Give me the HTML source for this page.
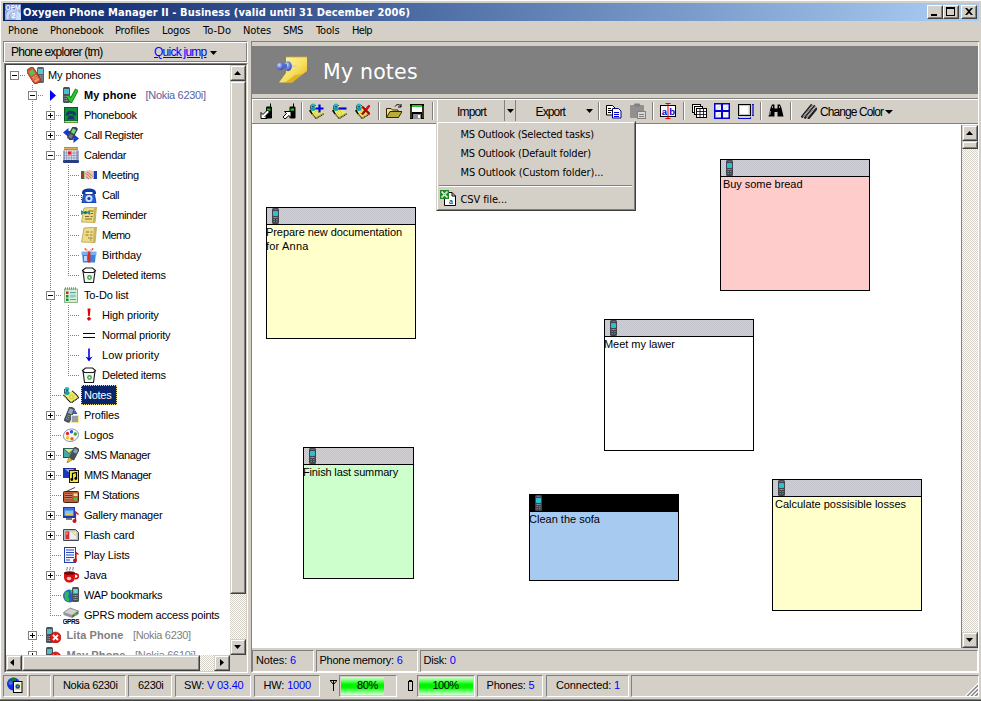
<!DOCTYPE html>
<html><head><meta charset="utf-8"><title>Oxygen Phone Manager II</title>
<style>
html,body{margin:0;padding:0;}
body{width:981px;height:701px;overflow:hidden;background:#D4D0C8;position:relative;font-family:"Liberation Sans",sans-serif;font-size:11px;color:#000;}
div,span,svg{position:absolute;box-sizing:border-box;}
i,b{font-style:normal;font-weight:normal}
.t{white-space:nowrap;line-height:14px;height:14px;}
.tah{font-family:"DejaVu Sans Condensed","DejaVu Sans",sans-serif;font-size:11px;}
.ver{font-family:"DejaVu Sans",sans-serif;}
.blue{color:#0000FF;position:static}
.raised{border:1px solid;border-color:#fff #404040 #404040 #fff;background:#D4D0C8;}
.raised:after{content:"";position:absolute;left:0;top:0;right:0;bottom:0;border:1px solid;border-color:#D4D0C8 #808080 #808080 #D4D0C8;}
.sbtn{border:1px solid;border-color:#D4D0C8 #404040 #404040 #D4D0C8;background:#D4D0C8;}
.sbtn:after{content:"";position:absolute;left:0;top:0;right:0;bottom:0;border:1px solid;border-color:#fff #808080 #808080 #fff;}
.sunk1{border:1px solid;border-color:#808080 #fff #fff #808080;}
.track{background-color:#fff;background-image:conic-gradient(#D4D0C8 25%,#fff 0 50%,#D4D0C8 0 75%,#fff 0);background-size:2px 2px;}
.hatch{background-color:#CBCBCF;background-image:conic-gradient(#C2C2CA 25%,#D3D1D3 0 50%,#C2C2CA 0 75%,#D3D1D3 0);background-size:2px 2px;}
.note{border:1px solid #000;}
.nh{left:0;top:0;right:0;height:17px;border-bottom:1px solid #000;}
.nt{font-size:11px;line-height:14px;white-space:nowrap;}
.vd{width:1px;background-image:linear-gradient(#808080 50%,transparent 50%);background-size:1px 2px;}
.hd{height:1px;background-image:linear-gradient(90deg,#808080 50%,transparent 50%);background-size:2px 1px;}
.pm{width:9px;height:9px;border:1px solid #808080;background:#fff;}
.pm i{position:absolute;left:1px;top:3px;width:5px;height:1px;background:#000;}
.pm b{position:absolute;left:3px;top:1px;width:1px;height:5px;background:#000;}
.sep{width:2px;border-left:1px solid #808080;border-right:1px solid #fff;}
.gauge{background:linear-gradient(#D0FFD0 0%,#A0FFA0 12%,#50FF50 26%,#00F800 40%,#00F000 50%,#00F800 60%,#50FF50 74%,#A0FFA0 88%,#D0FFD0 100%);}
</style></head>
<body>
<div style="left:0;top:0;width:981px;height:1px;background:#fff"></div>
<div style="left:0;top:0;width:1px;height:699px;background:#fff"></div>
<div style="left:0;top:699px;width:981px;height:1px;background:#808080"></div>
<div style="left:0;top:700px;width:981px;height:1px;background:#404040"></div>
<div style="left:3px;top:3px;width:976px;height:18px;background:linear-gradient(90deg,#0A246A 0%,#0A246A 1%,#A6CAF0 97%,#A6CAF0 100%);"></div>
<svg style="left:5px;top:4px" width="16" height="16" viewBox="0 0 16 16"><rect width="16" height="16" fill="#90ACE0"/><rect width="16" height="6" fill="#6888C8"/><path d="M3 15C1 9 6 5 11 7" stroke="#C8D8F8" stroke-width="2.500" fill="none"/><circle cx="9.500" cy="11" r="4.500" fill="#B0C4F0"/><path d="M12 6l4 4v6h-5z" fill="#C8DCFC"/><text x="0.500" y="5.800" font-size="6.500" font-weight="bold" fill="#fff" font-family="Liberation Sans,sans-serif" textLength="15">OPM</text><text x="6.500" y="13.500" font-size="7" font-weight="bold" fill="#fff" font-family="Liberation Sans,sans-serif">2</text></svg>
<span class="t" style="left:23px;top:6px;letter-spacing:0.098px;color:#fff;font-weight:bold;font-family:'DejaVu Sans Condensed','DejaVu Sans',sans-serif;">Oxygen Phone Manager II - Business (valid until 31 December 2006)</span>
<div class="raised" style="left:927px;top:5px;width:16px;height:14px;"><div style="left:3px;top:8px;width:6px;height:2px;background:#000"></div></div>
<div class="raised" style="left:943px;top:5px;width:16px;height:14px;"><div style="left:2px;top:1px;width:9px;height:9px;border:1px solid #000;border-top-width:2px"></div></div>
<div class="raised" style="left:961px;top:5px;width:16px;height:14px;"><svg style="left:3px;top:2px" width="8" height="7" viewBox="0 0 8 7"><path d="M0 0h2l2 2 2-2h2L5 3.500 8 7H6L4 5 2 7H0l3-3.500z" fill="#000"/></svg></div>
<span class="t tah" style="left:8px;top:24px;letter-spacing:-0.132px;">Phone</span>
<span class="t tah" style="left:50px;top:24px;letter-spacing:-0.142px;">Phonebook</span>
<span class="t tah" style="left:115px;top:24px;letter-spacing:-0.173px;">Profiles</span>
<span class="t tah" style="left:162px;top:24px;letter-spacing:-0.173px;">Logos</span>
<span class="t tah" style="left:203px;top:24px;letter-spacing:0.064px;">To-Do</span>
<span class="t tah" style="left:243px;top:24px;letter-spacing:-0.116px;">Notes</span>
<span class="t tah" style="left:283px;top:24px;letter-spacing:-0.369px;">SMS</span>
<span class="t tah" style="left:316px;top:24px;letter-spacing:-0.138px;">Tools</span>
<span class="t tah" style="left:352px;top:24px;letter-spacing:-0.642px;">Help</span>
<div style="left:3px;top:41px;width:244px;height:21px;border:1px solid #808080;"></div>
<div style="left:4px;top:42px;width:244px;height:21px;border:1px solid #fff;"></div>
<div style="left:5px;top:43px;width:241px;height:18px;background:#D4D0C8"></div>
<span class="t" style="left:11px;top:45px;letter-spacing:-0.765px;font-size:12px;">Phone explorer (tm)</span>
<span class="t" style="left:154px;top:45px;letter-spacing:-0.752px;font-size:12px;color:#0000FF;text-decoration:underline;">Quick jump</span>
<svg style="left:210px;top:51px" width="7" height="4"><path d="M0 0h7L3.500 4z" fill="#000"/></svg>
<div style="left:4px;top:63px;width:244px;height:610px;border:1px solid;border-color:#808080 #fff #fff #808080;background:#fff"></div>
<div style="left:5px;top:64px;width:242px;height:608px;border:1px solid;border-color:#404040 #D4D0C8 #D4D0C8 #404040;background:#fff;overflow:hidden">
<div class="vd" style="left:26px;top:20px;height:587px"></div>
<div class="vd" style="left:44px;top:40px;height:511px"></div>
<div class="vd" style="left:62px;top:100px;height:111px"></div>
<div class="vd" style="left:62px;top:240px;height:71px"></div>
<div class="hd" style="left:14px;top:10px;width:6px"></div>
<div class="pm" style="left:4px;top:6px"><i></i></div>
<svg style="left:21px;top:2px" width="18" height="17" viewBox="0 0 18 17"><rect x="10" y="0" width="7" height="16" rx="1.500" fill="#5C646C"/><rect x="11" y="2" width="5" height="5" fill="#58C8D0"/><path d="M11.500 9h4M11.500 11h4M11.500 13h4" stroke="#A8B0B8" stroke-dasharray="1 .5"/><g transform="rotate(-32 7 9)"><rect x="3" y="0" width="8" height="17" rx="2.500" fill="#D8502C"/><rect x="3" y="0" width="8" height="17" rx="2.500" fill="none" stroke="#8C2810" stroke-width=".7"/><rect x="4.500" y="2.500" width="5" height="5" fill="#58C060"/><rect x="4.500" y="9" width="5" height="6" rx="1" fill="#F0A080"/><path d="M5 10.500h4M5 12.500h4" stroke="#B03818" stroke-dasharray="1 .5"/></g></svg>
<span class="t" style="left:42px;top:3px;letter-spacing:-0.112px;">My phones</span>
<div class="hd" style="left:32px;top:30px;width:6px"></div>
<div class="pm" style="left:22px;top:26px"><i></i></div>
<svg style="left:56px;top:22px" width="16" height="16" viewBox="0 0 16 16"><rect x="1" y="0" width="7" height="16" rx="1.500" fill="#485058"/><rect x="2" y="2" width="5" height="5" fill="#48C0C8"/><path d="M2.500 9.500h4M2.500 11.500h4M2.500 13.500h4" stroke="#98A0A8" stroke-dasharray="1 .5"/><path d="M5.500 9l3.500 4.500L15 2.500" stroke="#0C780C" stroke-width="4" fill="none"/><path d="M5.500 9l3.500 4.500L15 2.500" stroke="#28C828" stroke-width="2.400" fill="none"/></svg>
<svg style="left:44px;top:25px" width="6" height="11"><path d="M0 0L6 5.500 0 11z" fill="#0000FF"/></svg>
<span class="t" style="left:78px;top:23px;letter-spacing:0.146px;color:#000;font-weight:bold;">My phone</span>
<span class="t" style="left:139.5px;top:23px;letter-spacing:-0.309px;color:#5A629C;">[Nokia 6230i]</span>
<div class="hd" style="left:50px;top:50px;width:6px"></div>
<div class="pm" style="left:40px;top:46px"><i></i><b></b></div>
<svg style="left:57px;top:42px" width="16" height="16" viewBox="0 0 16 16"><rect x="1" y="0" width="14" height="16" fill="#085828"/><rect x="2" y="1" width="12" height="12.500" fill="#10903C"/><rect x="1.500" y="14" width="13" height="1.500" fill="#D8D060"/><path d="M3 7.500c0-5 10-5 10 0v1h-3V7H6v1.500H3z" fill="#183868"/><path d="M4 12.500l2-4h4l2 4z" fill="#183868"/></svg>
<span class="t" style="left:78px;top:43px;letter-spacing:-0.329px;">Phonebook</span>
<div class="hd" style="left:50px;top:70px;width:6px"></div>
<div class="pm" style="left:40px;top:66px"><i></i><b></b></div>
<svg style="left:57px;top:62px" width="16" height="16" viewBox="0 0 16 16"><path d="M0 5.500L5.500 1v3H10v3H5.500v3z" fill="#1838D0"/><path d="M16 11.500L10.500 7v3H6v3h4.500v3z" fill="#1838D0"/><path d="M6 11.500l5 .5" stroke="#30C0D8" stroke-width="1.200"/><g transform="rotate(28 9 7)"><rect x="6" y="-1" width="6" height="14" rx="2" fill="#384048"/><rect x="7.300" y="1.500" width="3.400" height="4.500" fill="#68E078"/><rect x="7.300" y="7.500" width="3.400" height="4" fill="#707880"/></g></svg>
<span class="t" style="left:78px;top:63px;letter-spacing:-0.29px;">Call Register</span>
<div class="hd" style="left:50px;top:90px;width:6px"></div>
<div class="pm" style="left:40px;top:86px"><i></i></div>
<svg style="left:57px;top:82px" width="16" height="16" viewBox="0 0 16 16"><rect x="1" y="0" width="14" height="3.500" fill="#C88C30"/><path d="M1.500 1.500h13" stroke="#F0D080" stroke-dasharray="1 1"/><rect x="1" y="3.500" width="14" height="9.500" fill="#DCE0EC"/><path d="M1 6h14M1 8.500h14M1 11h14M3.500 3.500v9.500M6 3.500v9.500M8.500 3.500v9.500M11 3.500v9.500M13.500 3.500v9.500" stroke="#8890B0" stroke-width=".7"/><rect x="5" y="4.500" width="3" height="3" fill="#E81828"/><rect x="0" y="13" width="16" height="3" rx="1" fill="#283C80"/><rect x="0.500" y="3.500" width="1" height="10" fill="#506098"/><rect x="14.500" y="3.500" width="1" height="10" fill="#506098"/></svg>
<span class="t" style="left:78px;top:83px;letter-spacing:-0.318px;">Calendar</span>
<div class="hd" style="left:64px;top:110px;width:10px"></div>
<svg style="left:75px;top:102px" width="16" height="16" viewBox="0 0 16 16"><rect x="0" y="4" width="3.500" height="8" fill="#188038"/><rect x="1" y="6" width="1.500" height="4" fill="#D02020"/><rect x="12.500" y="4" width="3.500" height="8" fill="#1840B8"/><path d="M3.500 4.500c3-2 6-2 9 0v6.500c-3 2-6 2-9 0z" fill="#F0C4B0"/><path d="M4.500 6.500c2 1 4 3 6 5M6 5c2 1 4 3 5.500 4.500M5 9.500l3 2.500" stroke="#A87058" stroke-width=".9" fill="none"/></svg>
<span class="t" style="left:96px;top:103px;letter-spacing:-0.32px;">Meeting</span>
<div class="hd" style="left:64px;top:130px;width:10px"></div>
<svg style="left:75px;top:122px" width="16" height="16" viewBox="0 0 16 16"><path d="M1 5.500C1 0 15 0 15 5.500V7h-3.500V5h-7v2H1z" fill="#1038A8"/><path d="M2.500 7.500h11L15 16H1z" fill="#2060D8"/><path d="M2.500 7.500h11L15 16H1z" fill="none" stroke="#0C2880" stroke-width=".8"/><circle cx="8" cy="11.500" r="3.500" fill="#D0E0FF"/><circle cx="8" cy="11.500" r="1.600" fill="#1038A8"/><path d="M0.500 8v6" stroke="#404040" stroke-dasharray="1 1"/></svg>
<span class="t" style="left:96px;top:123px;letter-spacing:-0.488px;">Call</span>
<div class="hd" style="left:64px;top:150px;width:10px"></div>
<svg style="left:75px;top:142px" width="16" height="16" viewBox="0 0 16 16"><path d="M3 1L15.500 0 14 15.500 0.500 15z" fill="#ECDC88"/><path d="M3 1L15.500 0 14 15.500 0.500 15z" fill="none" stroke="#B8A048" stroke-width=".8"/><path d="M13 0.500l2.500-.5-1.500 15.500-2-.2z" fill="#C8B460"/><path d="M9 4h3.500M9.500 6.500h2.500M4 9.500h4M9.500 9.500h2M4 12h7" stroke="#806828"/><path d="M0 3l4 2.500L0 8zM9 3L5 5.500 9 8z" fill="#209890"/><circle cx="4.500" cy="5.500" r="1.500" fill="#106860"/></svg>
<span class="t" style="left:96px;top:143px;letter-spacing:-0.398px;">Reminder</span>
<div class="hd" style="left:64px;top:170px;width:10px"></div>
<svg style="left:75px;top:162px" width="16" height="16" viewBox="0 0 16 16"><path d="M3 1L15.500 0 14 15.500 0.500 15z" fill="#ECDC88"/><path d="M3 1L15.500 0 14 15.500 0.500 15z" fill="none" stroke="#B8A048" stroke-width=".8"/><path d="M13 0.500l2.500-.5-1.500 15.500-2-.2z" fill="#C8B460"/><path d="M5 5h3M9.500 5h2M4.500 8h3M9 8h2.500M7 11h4.500M9 13h1.500" stroke="#907830"/></svg>
<span class="t" style="left:96px;top:163px;letter-spacing:-0.641px;">Memo</span>
<div class="hd" style="left:64px;top:190px;width:10px"></div>
<svg style="left:75px;top:182px" width="16" height="16" viewBox="0 0 16 16"><path d="M1 6h14l-1 9.500H2z" fill="#3C84D8"/><path d="M0.500 4.500h15V8h-15z" fill="#78B0F0"/><path d="M3 9h3v5H3z" fill="#B8D8FF"/><rect x="6.800" y="4.500" width="2.600" height="11" fill="#E02828"/><path d="M8 4.500C4 -2 0 3 8 4.500C16 3 12 -2 8 4.500" fill="#E83030"/><path d="M8 4.500C5 0.500 3 3 8 4.500C13 3 11 0.500 8 4.500" fill="#fff"/></svg>
<span class="t" style="left:96px;top:183px;letter-spacing:-0.107px;">Birthday</span>
<div class="hd" style="left:64px;top:210px;width:10px"></div>
<svg style="left:75px;top:202px" width="16" height="16" viewBox="0 0 16 16"><path d="M2 4l1.500 11.500h9L14 4z" fill="#F4F4F4" stroke="#181818" stroke-width="1.100"/><path d="M1.500 3.500L4.500 1h7l3 2.500-2 2h-9z" fill="#fff" stroke="#181818" stroke-width="1.100"/><circle cx="8.500" cy="10.500" r="2.400" fill="#38A838"/><circle cx="8.500" cy="10.500" r="1" fill="#fff"/></svg>
<span class="t" style="left:96px;top:203px;letter-spacing:-0.274px;">Deleted items</span>
<div class="hd" style="left:50px;top:230px;width:6px"></div>
<div class="pm" style="left:40px;top:226px"><i></i></div>
<svg style="left:57px;top:222px" width="16" height="16" viewBox="0 0 16 16"><rect x="1.500" y="2" width="13" height="13.500" fill="#D4F0D0" stroke="#78A078" stroke-width=".8"/><path d="M2 1.500h12" stroke="#B88828" stroke-width="2.500" stroke-dasharray="1 1"/><rect x="3" y="4.500" width="2.500" height="2.500" fill="#D82020"/><rect x="3" y="8" width="2.500" height="2.500" fill="#208828"/><rect x="3" y="11.500" width="2.500" height="2.500" fill="#208828"/><path d="M7 5.500h6M7 9h6M7 12.500h6" stroke="#58A8B0" stroke-width="1.200"/><path d="M7 7h5M7 10.700h4" stroke="#A0D0D0" stroke-width=".8"/></svg>
<span class="t" style="left:78px;top:223px;letter-spacing:-0.135px;">To-Do list</span>
<div class="hd" style="left:64px;top:250px;width:10px"></div>
<svg style="left:75px;top:242px" width="16" height="16" viewBox="0 0 16 16"><path d="M6.500 1.500h3L8.800 9H7.200z" fill="#E80000"/><path d="M8 9.500l2.200 2.200L8 14l-2.200-2.300z" fill="#E80000"/></svg>
<span class="t" style="left:96px;top:243px;letter-spacing:-0.153px;">High priority</span>
<div class="hd" style="left:64px;top:270px;width:10px"></div>
<svg style="left:75px;top:262px" width="16" height="16" viewBox="0 0 16 16"><path d="M2 6.500h12M2 10.500h12" stroke="#000" stroke-width="1.100"/></svg>
<span class="t" style="left:96px;top:263px;letter-spacing:-0.214px;">Normal priority</span>
<div class="hd" style="left:64px;top:290px;width:10px"></div>
<svg style="left:75px;top:282px" width="16" height="16" viewBox="0 0 16 16"><path d="M8 1.500v10" stroke="#0000E8" stroke-width="1.600"/><path d="M4.500 9.500L8 14.500l3.500-5-3.500 1.500z" fill="#0000E8"/></svg>
<span class="t" style="left:96px;top:283px;letter-spacing:0.088px;">Low priority</span>
<div class="hd" style="left:64px;top:310px;width:10px"></div>
<svg style="left:75px;top:302px" width="16" height="16" viewBox="0 0 16 16"><path d="M2 4l1.500 11.500h9L14 4z" fill="#F4F4F4" stroke="#181818" stroke-width="1.100"/><path d="M1.500 3.500L4.500 1h7l3 2.500-2 2h-9z" fill="#fff" stroke="#181818" stroke-width="1.100"/><circle cx="8.500" cy="10.500" r="2.400" fill="#38A838"/><circle cx="8.500" cy="10.500" r="1" fill="#fff"/></svg>
<span class="t" style="left:96px;top:303px;letter-spacing:-0.274px;">Deleted items</span>
<div class="hd" style="left:46px;top:330px;width:10px"></div>
<svg style="left:57px;top:322px" width="16" height="16" viewBox="0 0 16 16"><path d="M0.500 8L9 3.500l7 7-8 5.500z" fill="#ECE868"/><path d="M0.500 8L8 16l8-5.500L9 3.500" fill="none" stroke="#000" stroke-width="1.200" stroke-dasharray="1.200 .5"/><circle cx="8.500" cy="10" r="2" fill="none" stroke="#C8C040" stroke-width=".8"/><ellipse cx="4" cy="2" rx="2.300" ry="1.900" fill="#20B8C0"/><rect x="2.800" y="2.800" width="2.400" height="2.500" fill="#0C6068"/><ellipse cx="4" cy="6" rx="2.700" ry="1.900" fill="#189CA8"/><path d="M1.500 2v4.500" stroke="#083038" stroke-width=".8"/></svg>
<div style="left:75px;top:320px;width:36px;height:20px;background:#0A246A;border:1px dotted #E8D880"></div>
<span class="t" style="left:78px;top:323px;letter-spacing:-0.267px;color:#fff;">Notes</span>
<div class="hd" style="left:50px;top:350px;width:6px"></div>
<div class="pm" style="left:40px;top:346px"><i></i><b></b></div>
<svg style="left:57px;top:342px" width="16" height="16" viewBox="0 0 16 16"><g transform="rotate(22 6 8)"><rect x="3" y="-0.500" width="6.500" height="16" rx="2" fill="#485058"/><rect x="4.200" y="1.500" width="4" height="5" fill="#98A8B8"/><path d="M4.500 8.500h3.500M4.500 10.500h3.500M4.500 12.500h3.500" stroke="#A0A8B0" stroke-dasharray="1 .5"/></g><rect x="8" y="8" width="8" height="8" fill="#F4E890"/><path d="M9 10h6M9 12h6M9 14h6" stroke="#3858C8"/><path d="M12 3l2.500 4h-5z" fill="#3858C8"/></svg>
<span class="t" style="left:78px;top:343px;letter-spacing:-0.16px;">Profiles</span>
<div class="hd" style="left:46px;top:370px;width:10px"></div>
<svg style="left:57px;top:362px" width="16" height="16" viewBox="0 0 16 16"><path d="M8.500 2C13 2 16 5 15.500 8.500 15 12 11 14.500 7 14.500 3 14.500 0.500 12 0.500 9 0.500 5 4 2 8.500 2z" fill="#FAF4EC" stroke="#7888B0" stroke-width=".9"/><circle cx="4.500" cy="6.500" r="1.700" fill="#E82828"/><circle cx="8.500" cy="4.800" r="1.700" fill="#2858E0"/><circle cx="12.300" cy="7" r="1.700" fill="#30A830"/><circle cx="4.500" cy="10.800" r="1.700" fill="#E8C818"/><circle cx="9" cy="11.800" r="1.700" fill="#E86818"/></svg>
<span class="t" style="left:78px;top:363px;letter-spacing:-0.055px;">Logos</span>
<div class="hd" style="left:50px;top:390px;width:6px"></div>
<div class="pm" style="left:40px;top:386px"><i></i><b></b></div>
<svg style="left:57px;top:382px" width="16" height="16" viewBox="0 0 16 16"><rect x="0.500" y="1.500" width="11" height="9" fill="#48A8A8" stroke="#185858"/><path d="M0.500 1.500l5.500 5 5.500-5z" fill="#E8E468" stroke="#185858" stroke-width=".8"/><g transform="rotate(28 11 7)"><rect x="8" y="0" width="6" height="13" rx="1.500" fill="#485058"/><rect x="9.200" y="1.800" width="3.600" height="4" fill="#90A0B0"/></g><path d="M4 16l2-6 3 3z" fill="#E8C418"/><path d="M4 16l2-6 3 3z" fill="none" stroke="#806808" stroke-width=".6"/></svg>
<span class="t" style="left:78px;top:383px;letter-spacing:-0.365px;">SMS Manager</span>
<div class="hd" style="left:50px;top:410px;width:6px"></div>
<div class="pm" style="left:40px;top:406px"><i></i><b></b></div>
<svg style="left:57px;top:402px" width="16" height="16" viewBox="0 0 16 16"><rect x="0" y="1" width="13" height="10" fill="#1838C0"/><path d="M0.500 1.500l6 5 6-5z" fill="#88A8F8" stroke="#102080" stroke-width=".8"/><rect x="6.500" y="3.500" width="9" height="12" fill="#F4E838" stroke="#201800" stroke-width="1"/><path d="M9.500 12.500V6.500l4-1v6" stroke="#000" fill="none" stroke-width="1.200"/><circle cx="8.800" cy="12.500" r="1.400"/><circle cx="12.800" cy="11.500" r="1.400"/></svg>
<span class="t" style="left:78px;top:403px;letter-spacing:-0.44px;">MMS Manager</span>
<div class="hd" style="left:46px;top:430px;width:10px"></div>
<svg style="left:57px;top:422px" width="16" height="16" viewBox="0 0 16 16"><path d="M2 5L12 0.500" stroke="#383838" stroke-width=".9"/><rect x="0.500" y="4.500" width="15" height="11" rx="1" fill="#C05830" stroke="#582010"/><rect x="2" y="6.500" width="7" height="7" fill="#703020"/><path d="M2 7.500h7M2 9.500h7M2 11.500h7M2 13h7" stroke="#E8A888" stroke-width=".7"/><rect x="10.500" y="6.500" width="4" height="2.500" fill="#E8E4A8"/><circle cx="12.500" cy="12" r="1.700" fill="#48C848"/></svg>
<span class="t" style="left:78px;top:423px;letter-spacing:-0.308px;">FM Stations</span>
<div class="hd" style="left:50px;top:450px;width:6px"></div>
<div class="pm" style="left:40px;top:446px"><i></i><b></b></div>
<svg style="left:57px;top:442px" width="16" height="16" viewBox="0 0 16 16"><rect x="0" y="0" width="12" height="11" fill="#1838C0"/><rect x="1.500" y="1.500" width="9" height="7" fill="#80C4F4"/><path d="M1.500 8.500l3-3.500 2 2 2-1 2 2.500z" fill="#E8C840"/><rect x="1.500" y="1.500" width="9" height="2" fill="#4070D0"/><rect x="3" y="11" width="6" height="2" fill="#787878"/><path d="M12.500 14V5l3 2.500" stroke="#C01818" fill="none" stroke-width="1.300"/><circle cx="11.500" cy="14" r="2" fill="#C01818"/></svg>
<span class="t" style="left:78px;top:443px;letter-spacing:-0.195px;">Gallery manager</span>
<div class="hd" style="left:50px;top:470px;width:6px"></div>
<div class="pm" style="left:40px;top:466px"><i></i><b></b></div>
<svg style="left:57px;top:462px" width="16" height="16" viewBox="0 0 16 16"><path d="M0.500 2.500h12l3 3v8h-15z" fill="#B4BCC4" stroke="#404850"/><rect x="2.500" y="4.500" width="3.500" height="7.500" fill="#D83030"/><rect x="3.300" y="5.500" width="1.200" height="2" fill="#F8D0A0"/><rect x="7" y="4.500" width="6.500" height="7.500" fill="#ECECF4"/><path d="M9 4.500l4 4" stroke="#E8E070" stroke-width="2"/></svg>
<span class="t" style="left:78px;top:463px;letter-spacing:-0.096px;">Flash card</span>
<div class="hd" style="left:46px;top:490px;width:10px"></div>
<svg style="left:57px;top:482px" width="16" height="16" viewBox="0 0 16 16"><rect x="1.500" y="0.500" width="11" height="15" fill="#F4F4FF" stroke="#2040A0"/><path d="M3 3h8M3 5.500h8M3 8h8M3 10.500h8M3 13h4" stroke="#2848C8" stroke-width="1.200"/><path d="M13 13V5.500l2.500 2" stroke="#C01818" fill="none" stroke-width="1.300"/><circle cx="12" cy="13.500" r="2" fill="#C01818"/></svg>
<span class="t" style="left:78px;top:483px;letter-spacing:-0.138px;">Play Lists</span>
<div class="hd" style="left:50px;top:510px;width:6px"></div>
<div class="pm" style="left:40px;top:506px"><i></i><b></b></div>
<svg style="left:57px;top:502px" width="16" height="16" viewBox="0 0 16 16"><path d="M1 6h11v4c0 3.500-2 5.500-5.500 5.500S1 13.500 1 10z" fill="#D41414"/><path d="M12 7c4.500-.5 4.500 5 0 4.500" stroke="#D41414" fill="none" stroke-width="1.800"/><ellipse cx="6.500" cy="6" rx="5.500" ry="1.800" fill="#700808"/><path d="M4 3.500c-1.500-1 1.500-2 0-3.500M7 3.500c-1.500-1 1.500-2 0-3.500M10 3.500c-1.500-1 1.500-2 0-3.500" stroke="#686868" fill="none" stroke-width=".9"/><ellipse cx="6" cy="11.500" rx="2.200" ry="1.800" fill="#fff" opacity=".75"/></svg>
<span class="t" style="left:78px;top:503px;letter-spacing:-0.109px;">Java</span>
<div class="hd" style="left:46px;top:530px;width:10px"></div>
<svg style="left:57px;top:522px" width="16" height="16" viewBox="0 0 16 16"><circle cx="6.500" cy="9" r="6.500" fill="#2060D8"/><path d="M2 6c2.500-3.500 5 0 3.500 2.500S8 12 5.500 15C2 13.500 0.500 9.500 2 6zM7 3c3.500-.5 5 2 5 4.500-2.500 1.500-4-1-5-4.500z" fill="#38B848"/><rect x="9" y="0" width="7" height="15" rx="1.500" fill="#485058"/><rect x="10.200" y="2" width="4.600" height="4.500" fill="#68D8D8"/><path d="M10.500 8.500h4M10.500 10.500h4M10.500 12.500h4" stroke="#98A0A8" stroke-dasharray="1 .5"/></svg>
<span class="t" style="left:78px;top:523px;letter-spacing:-0.224px;">WAP bookmarks</span>
<div class="hd" style="left:46px;top:550px;width:10px"></div>
<svg style="left:57px;top:542px" width="17" height="18" viewBox="0 0 17 18"><path d="M0.500 5.500L7 1l8.500 3L9 8.500z" fill="#D0D0D0" stroke="#585858" stroke-width=".6"/><path d="M0.500 5.500V8L9 11V8.500z" fill="#989898"/><path d="M9 8.500V11l6.500-4V4z" fill="#686868"/><circle cx="12.500" cy="7.500" r="1.100" fill="#30E830"/><text x="-0.500" y="16.500" font-size="6.500" font-weight="bold" font-family="Liberation Sans,sans-serif" fill="#000" textLength="17">GPRS</text></svg>
<span class="t" style="left:78px;top:543px;letter-spacing:-0.217px;">GPRS modem access points</span>
<div class="hd" style="left:32px;top:570px;width:6px"></div>
<div class="pm" style="left:22px;top:566px"><i></i><b></b></div>
<svg style="left:39px;top:562px" width="16" height="16" viewBox="0 0 16 16"><rect x="1" y="0" width="7" height="16" rx="1.500" fill="#485058"/><rect x="2" y="2" width="5" height="5" fill="#48C0C8"/><path d="M2.500 9.500h4M2.500 11.500h4M2.500 13.500h4" stroke="#98A0A8" stroke-dasharray="1 .5"/><circle cx="10.500" cy="10.500" r="5.500" fill="#E01818"/><circle cx="10.500" cy="10.500" r="5.500" fill="none" stroke="#901010" stroke-width=".6"/><path d="M8 8l5 5M13 8l-5 5" stroke="#fff" stroke-width="1.800"/></svg>
<span class="t" style="left:60.5px;top:563px;letter-spacing:0.077px;color:#808080;font-weight:bold;">Lita Phone</span>
<span class="t" style="left:127px;top:563px;letter-spacing:-0.339px;color:#808080;">[Nokia 6230]</span>
<div class="hd" style="left:32px;top:590px;width:6px"></div>
<div class="pm" style="left:22px;top:586px"><i></i><b></b></div>
<svg style="left:39px;top:582px" width="16" height="16" viewBox="0 0 16 16"><rect x="1" y="0" width="7" height="16" rx="1.500" fill="#485058"/><rect x="2" y="2" width="5" height="5" fill="#48C0C8"/><path d="M2.500 9.500h4M2.500 11.500h4M2.500 13.500h4" stroke="#98A0A8" stroke-dasharray="1 .5"/><circle cx="10.500" cy="10.500" r="5.500" fill="#E01818"/><circle cx="10.500" cy="10.500" r="5.500" fill="none" stroke="#901010" stroke-width=".6"/><path d="M8 8l5 5M13 8l-5 5" stroke="#fff" stroke-width="1.800"/></svg>
<span class="t" style="left:60.5px;top:583px;letter-spacing:0.103px;color:#808080;font-weight:bold;">May Phone</span>
<span class="t" style="left:129px;top:583px;letter-spacing:-0.286px;color:#808080;">[Nokia 6610i]</span>
<div class="track" style="left:224px;top:0px;width:16px;height:590px"></div>
<div class="sbtn" style="left:224px;top:0px;width:16px;height:16px"><svg style="left:3px;top:5px" width="7" height="4"><path d="M0 4h7L3.500 0z" fill="#000"/></svg></div>
<div class="sbtn" style="left:224px;top:16px;width:16px;height:513px"></div>
<div class="sbtn" style="left:224px;top:574px;width:16px;height:16px"><svg style="left:3px;top:5px" width="7" height="4"><path d="M0 0h7L3.500 4z" fill="#000"/></svg></div>
<div class="track" style="left:0px;top:590px;width:224px;height:16px"></div>
<div class="sbtn" style="left:0px;top:590px;width:16px;height:16px"><svg style="left:3px;top:3px" width="4" height="7"><path d="M4 0v7L0 3.500z" fill="#000"/></svg></div>
<div class="sbtn" style="left:16px;top:590px;width:178px;height:16px"></div>
<div class="sbtn" style="left:208px;top:590px;width:16px;height:16px"><svg style="left:5px;top:3px" width="4" height="7"><path d="M0 0v7L4 3.500z" fill="#000"/></svg></div>
<div style="left:224px;top:590px;width:16px;height:16px;background:#D4D0C8"></div>
</div>
<div style="left:251px;top:41px;width:728px;height:1px;background:#808080"></div>
<div style="left:251px;top:41px;width:1px;height:631px;background:#808080"></div>
<div style="left:978px;top:42px;width:1px;height:631px;background:#fff"></div>
<div style="left:252px;top:672px;width:727px;height:1px;background:#fff"></div>
<div style="left:252px;top:46px;width:726px;height:48px;background:#808080"></div>
<svg style="left:276px;top:56px" width="32" height="28" viewBox="0 0 32 28"><defs><linearGradient id="ng" x1="0" y1="0" x2="1" y2="1"><stop offset="0" stop-color="#FFF8B0"/><stop offset=".55" stop-color="#F8E060"/><stop offset="1" stop-color="#E0B018"/></linearGradient><radialGradient id="pg" cx=".35" cy=".35" r=".7"><stop offset="0" stop-color="#D0DCFF"/><stop offset=".5" stop-color="#7088E0"/><stop offset="1" stop-color="#3848A8"/></radialGradient></defs><path d="M10 1H31V15L16 26.500H3L10 17z" fill="url(#ng)"/><path d="M19 19c4 0 8-1 12-4L16 26.500H9z" fill="#D8A818" opacity=".75"/><path d="M10 1H31" stroke="#C8A830" stroke-width=".8"/><path d="M14 10.200h6.500" stroke="#C8CCDC" stroke-width="1.400"/><ellipse cx="4.300" cy="10.200" rx="3.600" ry="3.800" fill="url(#pg)"/><ellipse cx="12" cy="10.200" rx="3.800" ry="5" fill="url(#pg)"/><rect x="7" y="8.200" width="4" height="4" fill="#5068C8"/></svg>
<span class="ver" style="left:323px;top:58px;font-size:20.5px;line-height:28px;color:#fff;white-space:nowrap;letter-spacing:0.2px">My notes</span>
<div style="left:252px;top:98px;width:726px;height:1px;background:#808080"></div>
<div style="left:252px;top:99px;width:726px;height:1px;background:#fff"></div>
<div style="left:252px;top:100px;width:1px;height:23px;background:#fff"></div>
<div style="left:252px;top:123px;width:726px;height:1px;background:#808080"></div>
<svg style="left:259px;top:103px" width="16" height="16" viewBox="0 0 16 16"><path d="M11.500 4V0.500" stroke="#000"/><rect x="7" y="3.500" width="6" height="12" rx="1.200" fill="#000"/><rect x="8" y="5.500" width="3.500" height="2.200" fill="#10D010"/><path d="M2 15.500V9.500l2 2L8.500 7l2 2-4.500 4.500 2 2z" fill="#fff" stroke="#000" stroke-width="1"/></svg>
<svg style="left:282px;top:103px" width="16" height="16" viewBox="0 0 16 16"><path d="M11.500 4V0.500" stroke="#000"/><rect x="7.500" y="3.500" width="6" height="12" rx="1.200" fill="#000"/><rect x="8.500" y="5.500" width="3.500" height="2.200" fill="#10D010"/><path d="M9 8.500v6l-2-2L3 16l-2-2 3.500-3.500-2-2z" fill="#fff" stroke="#000" stroke-width="1"/></svg>
<svg style="left:308px;top:103px" width="16" height="16" viewBox="0 0 16 16"><path d="M1.500 7.500L9 3l7 7.500-8 5z" fill="#ECE868"/><path d="M1.500 7.500L8 15.500l8-5" fill="none" stroke="#000" stroke-width="1.300" stroke-dasharray="1.200 .6"/><path d="M3 9.500l5 5 6.500-4" fill="none" stroke="#B8B030" stroke-width="1"/><circle cx="8.500" cy="10" r="2" fill="none" stroke="#D0C840" stroke-width=".8"/><path d="M2 7l2 4" stroke="#000" stroke-width="1.200"/><ellipse cx="5" cy="2.300" rx="2.300" ry="1.900" fill="#20B8C0"/><rect x="3.800" y="3" width="2.400" height="2.500" fill="#0C6068"/><ellipse cx="5" cy="6" rx="2.700" ry="1.900" fill="#189CA8"/><path d="M2.500 2.500v4M7.500 2v1" stroke="#083038" stroke-width=".7"/><path d="M11.500 1.500v8M7.500 5.500h8" stroke="#0000E8" stroke-width="2.200"/></svg>
<svg style="left:331px;top:103px" width="16" height="16" viewBox="0 0 16 16"><path d="M1.500 7.500L9 3l7 7.500-8 5z" fill="#ECE868"/><path d="M1.500 7.500L8 15.500l8-5" fill="none" stroke="#000" stroke-width="1.300" stroke-dasharray="1.200 .6"/><path d="M3 9.500l5 5 6.500-4" fill="none" stroke="#B8B030" stroke-width="1"/><circle cx="8.500" cy="10" r="2" fill="none" stroke="#D0C840" stroke-width=".8"/><path d="M2 7l2 4" stroke="#000" stroke-width="1.200"/><ellipse cx="5" cy="2.300" rx="2.300" ry="1.900" fill="#20B8C0"/><rect x="3.800" y="3" width="2.400" height="2.500" fill="#0C6068"/><ellipse cx="5" cy="6" rx="2.700" ry="1.900" fill="#189CA8"/><path d="M2.500 2.500v4M7.500 2v1" stroke="#083038" stroke-width=".7"/><path d="M7.500 5.500h8" stroke="#0000E8" stroke-width="2.200"/></svg>
<svg style="left:354px;top:103px" width="16" height="16" viewBox="0 0 16 16"><path d="M1.500 7.500L9 3l7 7.500-8 5z" fill="#ECE868"/><path d="M1.500 7.500L8 15.500l8-5" fill="none" stroke="#000" stroke-width="1.300" stroke-dasharray="1.200 .6"/><path d="M3 9.500l5 5 6.500-4" fill="none" stroke="#B8B030" stroke-width="1"/><circle cx="8.500" cy="10" r="2" fill="none" stroke="#D0C840" stroke-width=".8"/><path d="M2 7l2 4" stroke="#000" stroke-width="1.200"/><ellipse cx="5" cy="2.300" rx="2.300" ry="1.900" fill="#20B8C0"/><rect x="3.800" y="3" width="2.400" height="2.500" fill="#0C6068"/><ellipse cx="5" cy="6" rx="2.700" ry="1.900" fill="#189CA8"/><path d="M2.500 2.500v4M7.500 2v1" stroke="#083038" stroke-width=".7"/><path d="M8 3.500l7.500 7.500M15.500 2.500l-7.500 9" stroke="#A80808" stroke-width="2.400"/><path d="M12 6l3.500-3.500" stroke="#F01010" stroke-width="1.500"/></svg>
<svg style="left:386px;top:103px" width="16" height="16" viewBox="0 0 16 16"><path d="M9 3.500c1.500-2.500 4.500-2.500 6 0M15 4V1M15 4h-3" stroke="#000" fill="none"/><path d="M0.500 14.500v-9h4.500l1.500 1.500h5.500v2" fill="#F0E480" stroke="#302800" stroke-width="1"/><path d="M0.500 14.500l3.500-6h12l-3.500 6z" fill="#B8AC38" stroke="#302800" stroke-width="1"/></svg>
<svg style="left:409px;top:103px" width="16" height="16" viewBox="0 0 16 16"><rect x="1" y="1" width="14" height="15" fill="#000"/><rect x="3" y="2" width="10" height="7" fill="#fff"/><rect x="3" y="2" width="10" height="2" fill="#28C828"/><rect x="4" y="11" width="8" height="5" fill="#909090"/><rect x="9" y="12" width="2" height="3" fill="#fff"/><rect x="1.500" y="3" width="1" height="12" fill="#686838"/><rect x="13.500" y="3" width="1" height="12" fill="#686838"/></svg>
<div class="sep" style="left:301px;top:102px;height:18px"></div>
<div class="sep" style="left:378px;top:102px;height:18px"></div>
<div class="sep" style="left:432px;top:102px;height:18px"></div>
<div class="sep" style="left:598px;top:102px;height:18px"></div>
<div class="sep" style="left:652px;top:102px;height:18px"></div>
<div class="sep" style="left:683px;top:102px;height:18px"></div>
<div class="sep" style="left:760px;top:102px;height:18px"></div>
<div class="sep" style="left:790px;top:102px;height:18px"></div>
<span class="t" style="left:457px;top:105px;letter-spacing:-0.835px;font-size:12px;">Import</span>
<div style="left:437px;top:100px;width:1px;height:22px;background:#fff"></div>
<div style="left:504px;top:100px;width:1px;height:22px;background:#808080"></div>
<div style="left:515px;top:100px;width:1px;height:22px;background:#808080"></div>
<svg style="left:507px;top:109px" width="7" height="4"><path d="M0 0h7L3.500 4z" fill="#000"/></svg>
<span class="t" style="left:535.5px;top:105px;letter-spacing:-0.864px;font-size:12px;">Export</span>
<svg style="left:586px;top:109px" width="7" height="4"><path d="M0 0h7L3.500 4z" fill="#000"/></svg>
<svg style="left:606px;top:103px" width="16" height="16" viewBox="0 0 16 16"><path d="M0.500 2.500h6l2.500 2.500v7h-8.500z" fill="#fff" stroke="#000"/><path d="M2 5.500h3M2 7.500h5M2 9.500h3" stroke="#000"/><path d="M6.500 5.500h6l2.500 2.500v7h-8.500z" fill="#fff" stroke="#000080"/><path d="M8 9.500h5M8 11.500h5M8 13.500h5" stroke="#0000D0"/></svg>
<svg style="left:630px;top:103px" width="16" height="16" viewBox="0 0 16 16"><rect x="0" y="2" width="14" height="13" rx="1" fill="#909090"/><rect x="4" y="0.500" width="6" height="3" rx="1" fill="#808080"/><rect x="7.500" y="8.500" width="8" height="7" fill="#D8D8D8" stroke="#808080"/><path d="M9 11.500h5M9 13.500h5" stroke="#808080"/></svg>
<svg style="left:660px;top:103px" width="16" height="16" viewBox="0 0 16 16"><rect x="0.500" y="2.500" width="15" height="11" fill="#fff" stroke="#000"/><path d="M8 0v16M5.500 0.500h5M5.500 15.500h5" stroke="#E80000"/><text x="1.800" y="11.500" font-size="9.500" font-weight="bold" font-family="Liberation Sans,sans-serif" fill="#0000D8">a</text><text x="9.300" y="11.500" font-size="9.500" font-weight="bold" font-family="Liberation Sans,sans-serif" fill="#0000D8">b</text></svg>
<svg style="left:692px;top:103px" width="16" height="16" viewBox="0 0 16 16"><rect x="0.500" y="1.500" width="8" height="8" fill="#fff" stroke="#000"/><rect x="2.500" y="3.500" width="8" height="8" fill="#fff" stroke="#000"/><rect x="4.500" y="5.500" width="10" height="9" fill="#fff" stroke="#000"/><path d="M4.500 8.500h10M4.500 11.500h10M8 5.500v9M11.500 5.500v9" stroke="#000" stroke-width=".8"/></svg>
<svg style="left:714px;top:103px" width="16" height="16" viewBox="0 0 16 16"><rect x="0" y="0" width="16" height="16" fill="#0000D0"/><rect x="1.500" y="1.500" width="5.500" height="5.500" fill="#F4F4F4"/><rect x="9" y="1.500" width="5.500" height="5.500" fill="#F4F4F4"/><rect x="1.500" y="9" width="5.500" height="5.500" fill="#F4F4F4"/><rect x="9" y="9" width="5.500" height="5.500" fill="#F4F4F4"/><path d="M2 7l5-5M9.500 7l5-5M2 14.500l5-5" stroke="#C8C8C8" stroke-width=".7"/></svg>
<svg style="left:738px;top:103px" width="16" height="16" viewBox="0 0 16 16"><rect x="0.500" y="1.500" width="12" height="11" fill="#C8C8C8" stroke="#000"/><rect x="2" y="3" width="8.500" height="8" fill="#fff"/><path d="M0.500 15.500h12M15 1v12" stroke="#0000D8" stroke-width="1.200"/><path d="M0.500 14v2M12.500 14v2M14 1.500h2M14 12.500h2" stroke="#0000D8" stroke-width=".8"/></svg>
<svg style="left:768px;top:103px" width="16" height="16" viewBox="0 0 16 16"><path d="M0.500 13.500L2.500 5l1.500-3.500h2.500v4h3v-4H12L13.500 5l2 8.500h-6V9h-3v4.500z" fill="#000"/><path d="M2.500 8l-.8 4M4.500 3v2M11.500 3v2" stroke="#fff" stroke-width=".8" opacity=".8"/></svg>
<svg style="left:801px;top:103px" width="16" height="16" viewBox="0 0 16 16"><path d="M0.500 14.500L11 1.500M3.500 15.500L14 2.500M7 16L16 5" stroke="#202020" stroke-width="2.200"/><path d="M2 13.500L11.500 2M5.500 14L14.500 3" stroke="#B8B8B8" stroke-width=".9"/></svg>
<span class="t" style="left:820px;top:105px;letter-spacing:-0.92px;font-size:12px;">Change Color</span>
<svg style="left:885px;top:110px" width="8" height="4"><path d="M0 0h8L4 4z" fill="#000"/></svg>
<div style="left:252px;top:124px;width:727px;height:524px;background:#fff"></div>
<div style="left:961px;top:125px;width:1px;height:523px;background:#808080"></div>
<div class="track" style="left:962px;top:125px;width:16px;height:523px"></div>
<div class="sbtn" style="left:962px;top:125px;width:16px;height:16px"><svg style="left:3px;top:5px" width="7" height="4"><path d="M0 4h7L3.500 0z" fill="#000"/></svg></div>
<div class="sbtn" style="left:962px;top:141px;width:16px;height:8px"></div>
<div class="sbtn" style="left:962px;top:632px;width:16px;height:16px"><svg style="left:3px;top:5px" width="7" height="4"><path d="M0 0h7L3.500 4z" fill="#000"/></svg></div>
<div class="note" style="left:266px;top:207px;width:150px;height:132px;background:#FFFFCC">
<div class="nh hatch" style=""><svg style="left:5px;top:0px" width="7" height="16" viewBox="0 0 7 16"><rect x="0" y="0" width="7" height="16" rx="1.500" fill="#40444C"/><rect x="1" y="3" width="5" height="5" rx=".8" fill="#30C0CC"/><path d="M1.500 9.500h4" stroke="#A0A4C0" stroke-width="1.200" stroke-dasharray="1.200 .4"/><path d="M1.500 11.500h4M1.500 13.700h4" stroke="#80848C" stroke-dasharray="1.500 1"/><rect x="1.500" y="0.800" width="4" height="1.200" fill="#686C80"/></svg></div>
<span class="nt" style="left:-1px;top:17px;letter-spacing:-0.064px;">Prepare new documentation</span>
<span class="nt" style="left:-1px;top:31px;letter-spacing:0.19px;">for Anna</span>
</div>
<div class="note" style="left:720px;top:159px;width:150px;height:132px;background:#FFCCCC">
<div class="nh hatch" style=""><svg style="left:5px;top:0px" width="7" height="16" viewBox="0 0 7 16"><rect x="0" y="0" width="7" height="16" rx="1.500" fill="#40444C"/><rect x="1" y="3" width="5" height="5" rx=".8" fill="#30C0CC"/><path d="M1.500 9.500h4" stroke="#A0A4C0" stroke-width="1.200" stroke-dasharray="1.200 .4"/><path d="M1.500 11.500h4M1.500 13.700h4" stroke="#80848C" stroke-dasharray="1.500 1"/><rect x="1.500" y="0.800" width="4" height="1.200" fill="#686C80"/></svg></div>
<span class="nt" style="left:2px;top:17px;letter-spacing:-0.043px;">Buy some bread</span>
</div>
<div class="note" style="left:604px;top:319px;width:150px;height:132px;background:#FFFFFF">
<div class="nh hatch" style=""><svg style="left:5px;top:0px" width="7" height="16" viewBox="0 0 7 16"><rect x="0" y="0" width="7" height="16" rx="1.500" fill="#40444C"/><rect x="1" y="3" width="5" height="5" rx=".8" fill="#30C0CC"/><path d="M1.500 9.500h4" stroke="#A0A4C0" stroke-width="1.200" stroke-dasharray="1.200 .4"/><path d="M1.500 11.500h4M1.500 13.700h4" stroke="#80848C" stroke-dasharray="1.500 1"/><rect x="1.500" y="0.800" width="4" height="1.200" fill="#686C80"/></svg></div>
<span class="nt" style="left:-1px;top:17px;letter-spacing:-0.04px;">Meet my lawer</span>
</div>
<div class="note" style="left:303px;top:447px;width:111px;height:132px;background:#CCFFCC">
<div class="nh hatch" style=""><svg style="left:5px;top:0px" width="7" height="16" viewBox="0 0 7 16"><rect x="0" y="0" width="7" height="16" rx="1.500" fill="#40444C"/><rect x="1" y="3" width="5" height="5" rx=".8" fill="#30C0CC"/><path d="M1.500 9.500h4" stroke="#A0A4C0" stroke-width="1.200" stroke-dasharray="1.200 .4"/><path d="M1.500 11.500h4M1.500 13.700h4" stroke="#80848C" stroke-dasharray="1.500 1"/><rect x="1.500" y="0.800" width="4" height="1.200" fill="#686C80"/></svg></div>
<span class="nt" style="left:-1px;top:17px;letter-spacing:-0.148px;">Finish last summary</span>
</div>
<div class="note" style="left:529px;top:494px;width:150px;height:87px;background:#A6CAF0">
<div class="nh " style="background:#000"><svg style="left:5px;top:0px" width="7" height="16" viewBox="0 0 7 16"><rect x="0" y="0" width="7" height="16" rx="1.500" fill="#40444C"/><rect x="1" y="3" width="5" height="5" rx=".8" fill="#30C0CC"/><path d="M1.500 9.500h4" stroke="#A0A4C0" stroke-width="1.200" stroke-dasharray="1.200 .4"/><path d="M1.500 11.500h4M1.500 13.700h4" stroke="#80848C" stroke-dasharray="1.500 1"/><rect x="1.500" y="0.800" width="4" height="1.200" fill="#686C80"/></svg></div>
<span class="nt" style="left:-1px;top:17px;letter-spacing:0.004px;">Clean the sofa</span>
</div>
<div class="note" style="left:772px;top:479px;width:150px;height:132px;background:#FFFFCC">
<div class="nh hatch" style=""><svg style="left:5px;top:0px" width="7" height="16" viewBox="0 0 7 16"><rect x="0" y="0" width="7" height="16" rx="1.500" fill="#40444C"/><rect x="1" y="3" width="5" height="5" rx=".8" fill="#30C0CC"/><path d="M1.500 9.500h4" stroke="#A0A4C0" stroke-width="1.200" stroke-dasharray="1.200 .4"/><path d="M1.500 11.500h4M1.500 13.700h4" stroke="#80848C" stroke-dasharray="1.500 1"/><rect x="1.500" y="0.800" width="4" height="1.200" fill="#686C80"/></svg></div>
<span class="nt" style="left:2px;top:17px;letter-spacing:-0.017px;">Calculate possisible losses</span>
</div>
<div style="left:436px;top:121px;width:200px;height:90px;border:1px solid;border-color:#D4D0C8 #404040 #404040 #D4D0C8;background:#D4D0C8"></div>
<div style="left:437px;top:122px;width:198px;height:88px;border:1px solid;border-color:#fff #808080 #808080 #fff"></div>
<span class="t tah" style="left:460.5px;top:128px;letter-spacing:-0.226px;">MS Outlook (Selected tasks)</span>
<span class="t tah" style="left:460.5px;top:147px;letter-spacing:-0.185px;">MS Outlook (Default folder)</span>
<span class="t tah" style="left:460.5px;top:166px;letter-spacing:-0.134px;">MS Outlook (Custom folder)...</span>
<div style="left:439px;top:185px;width:193px;height:2px;border-top:1px solid #808080;border-bottom:1px solid #fff"></div>
<svg style="left:440px;top:190px" width="16" height="16" viewBox="0 0 16 16"><path d="M4.500 2.500h7.500l3.500 3.500v9.500h-11z" fill="#fff" stroke="#000"/><path d="M12 2.500v3.500h3.500" fill="none" stroke="#000"/><rect x="0" y="0" width="9" height="9" fill="#208828"/><path d="M1.500 1.500l6 6M7.500 1.500l-6 6" stroke="#fff" stroke-width="1.600"/><path d="M1.500 1.500l6 6M7.500 1.500l-6 6" stroke="#208828" stroke-width=".5" stroke-dasharray="1 1"/><text x="9" y="14" font-size="7" font-family="Liberation Sans,sans-serif">a</text></svg>
<span class="t tah" style="left:460.5px;top:193px;letter-spacing:-0.101px;">CSV file...</span>
<div class="sunk1" style="left:252px;top:650px;width:62px;height:22px"></div>
<div class="sunk1" style="left:316px;top:650px;width:102px;height:22px"></div>
<div class="sunk1" style="left:420px;top:650px;width:558px;height:22px"></div>
<span class="t" style="left:256px;top:653px;letter-spacing:-0.121px;">Notes: <span class="blue">6</span></span>
<span class="t" style="left:319.5px;top:653px;letter-spacing:-0.255px;">Phone memory: <span class="blue">6</span></span>
<span class="t" style="left:423.5px;top:653px;letter-spacing:-0.231px;">Disk: <span class="blue">0</span></span>
<div class="sunk1" style="left:3px;top:675px;width:25px;height:22px"></div>
<div class="sunk1" style="left:29px;top:675px;width:22px;height:22px"></div>
<div class="sunk1" style="left:53px;top:675px;width:73px;height:22px"></div>
<div class="sunk1" style="left:128px;top:675px;width:44px;height:22px"></div>
<div class="sunk1" style="left:175px;top:675px;width:76px;height:22px"></div>
<div class="sunk1" style="left:254px;top:675px;width:66px;height:22px"></div>
<div class="sunk1" style="left:339px;top:675px;width:58px;height:22px"></div>
<div class="sunk1" style="left:417px;top:675px;width:58px;height:22px"></div>
<div class="sunk1" style="left:477px;top:675px;width:66px;height:22px"></div>
<div class="sunk1" style="left:546px;top:675px;width:83px;height:22px"></div>
<div class="sunk1" style="left:631px;top:675px;width:348px;height:22px"></div>
<svg style="left:7px;top:677px" width="16" height="16" viewBox="0 0 16 16"><circle cx="6.500" cy="7" r="6.500" fill="#1030E0"/><path d="M4 1.500c2.500-1.500 5-.5 6 1-1.500 2-4 2.500-6 1.500-1.500-1-1-2 0-2.500z" fill="#187828"/><circle cx="3.500" cy="6" r="2" fill="#4870F0"/><rect x="6.500" y="4.500" width="8.500" height="11" fill="#F8F8F0" stroke="#000"/><rect x="8" y="6.500" width="5.500" height="6.500" fill="#F0E850"/><circle cx="10.700" cy="9.500" r="2.200" fill="#1030C0"/><circle cx="10.700" cy="9.300" r="1" fill="#38B848"/></svg>
<span class="t" style="left:63px;top:678px;letter-spacing:-0.327px;">Nokia 6230i</span>
<span class="t" style="left:138px;top:678px;letter-spacing:-0.283px;">6230i</span>
<span class="t" style="left:184px;top:678px;letter-spacing:-0.187px;">SW: <span class="blue">V 03.40</span></span>
<span class="t" style="left:263.5px;top:678px;letter-spacing:-0.152px;">HW: <span class="blue">1000</span></span>
<span class="t" style="left:486.5px;top:678px;letter-spacing:-0.171px;">Phones: <span class="blue">5</span></span>
<span class="t" style="left:556px;top:678px;letter-spacing:-0.12px;">Connected: <span class="blue">1</span></span>
<div class="gauge" style="left:341px;top:677px;width:43px;height:18px"></div>
<span class="t" style="left:357px;top:678px;letter-spacing:-0.339px;">80%</span>
<svg style="left:330px;top:680px" width="7" height="11"><path d="M0 0.500h7M3.500 0.500v10.500M0.500 1l3 3.500 3-3.500" stroke="#000" fill="none"/></svg>
<div class="gauge" style="left:419px;top:677px;width:54px;height:18px"></div>
<span class="t" style="left:432.5px;top:678px;letter-spacing:-0.534px;">100%</span>
<div style="left:408px;top:681px;width:5px;height:10px;border:1px solid #000"></div><div style="left:409px;top:680px;width:3px;height:1px;background:#000"></div>
<svg style="left:965px;top:683px" width="13" height="13"><path d="M13 2L2 13M13 6L6 13M13 10L10 13" stroke="#808080" stroke-width="1.700"/><path d="M13 0.500L0.500 13M13 4.500L4.500 13M13 8.500L8.500 13" stroke="#fff" stroke-width="1.100"/></svg>
</body></html>
